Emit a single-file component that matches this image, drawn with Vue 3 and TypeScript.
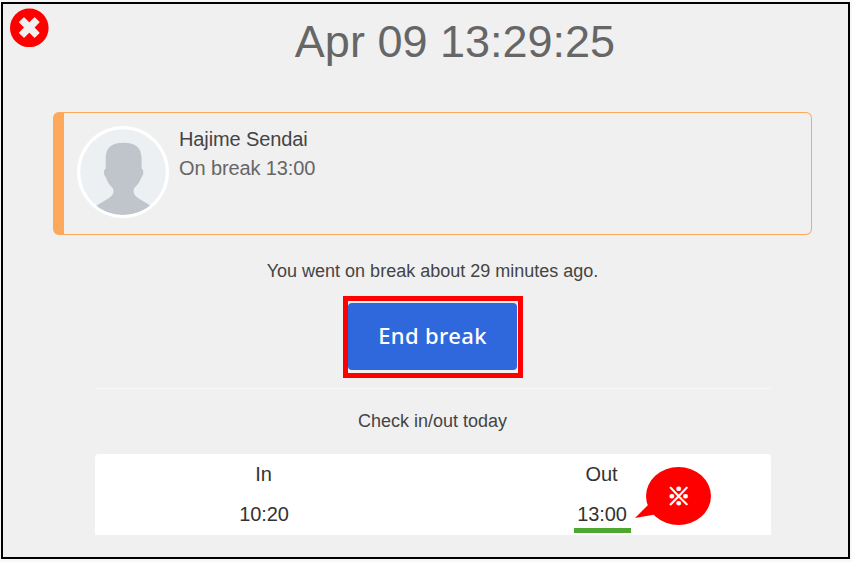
<script setup lang="ts">
interface Entry {
  label: string
  time: string
  marked: boolean
}

const clock = 'Apr 09 13:29:25'
const employee = { name: 'Hajime Sendai', status: 'On break 13:00' }
const entries: Entry[] = [
  { label: 'In', time: '10:20', marked: false },
  { label: 'Out', time: '13:00', marked: true },
]
</script>

<template>
  <div class="page">
    <main class="frame">
      <button class="close" type="button" aria-label="Close">
        <svg viewBox="0 0 39 39" width="39" height="39">
          <circle cx="19.300" cy="19.800" r="19.300" fill="#ff0000" />
          <path
            d="M14 9.800L19.300 15.100L24.600 9.800L29 14.200L23.700 19.500L29 24.800L24.600 29.200L19.300 23.900L14 29.200L9.600 24.800L14.900 19.500L9.600 14.200Z"
            fill="#f0f0f0"
            stroke="#f0f0f0"
            stroke-width="1.200"
            stroke-linejoin="round"
          />
        </svg>
      </button>

      <h1 class="clock">{{ clock }}</h1>

      <section class="card">
        <svg class="avatar" viewBox="0 0 92 92" width="92" height="92">
          <defs>
            <clipPath id="face"><circle cx="46" cy="46" r="43" /></clipPath>
          </defs>
          <circle cx="46" cy="46" r="46" fill="#ffffff" />
          <circle cx="46" cy="46" r="42.800" fill="#ecf0f3" />
          <path
            clip-path="url(#face)"
            fill="#c0c4cb"
            d="M46.500 16.700C34 16.700 28.700 22 28.700 33V42.500C26.300 44 26.500 49 28.700 51C30 56 33.500 60 36 62.500C37 66 36.500 69 32 72C28 75 23 77 19 80V92H74V80C70 77 65 75 61 72C56.500 69 56 66 57 62.500C59.500 60 63 56 64.500 51C66.800 49 67 44 64.600 42.500V33C64.600 22 59 16.700 46.500 16.700Z"
          />
        </svg>
        <div class="person">
          <div class="name">{{ employee.name }}</div>
          <div class="status">{{ employee.status }}</div>
        </div>
      </section>

      <p class="notice">You went on break about 29 minutes ago.</p>

      <div class="highlight">
        <button class="action" type="button">End break</button>
      </div>

      <hr class="rule" />
      <h2 class="heading">Check in/out today</h2>

      <section class="entries">
        <div v-for="entry in entries" :key="entry.label" class="entry">
          <div class="label">{{ entry.label }}</div>
          <div class="time" :class="{ marked: entry.marked }">{{ entry.time }}</div>
        </div>
        <div class="callout">
          <svg viewBox="0 0 76 58" width="76" height="58">
            <ellipse cx="43.500" cy="29" rx="32.500" ry="29" fill="#ff0000" />
            <path d="M13 38L0 51L20 47.500Z" fill="#ff0000" />
            <text class="symbol" x="43.800" y="37.500" text-anchor="middle" fill="#ffffff">※</text>
          </svg>
        </div>
      </section>
    </main>
  </div>
</template>

<style>
body {
  background: #f5f5f5;
}
</style>

<style scoped>
.page {
  box-sizing: border-box;
  height: 562px;
  padding: 2px 2px 3px 1px;
  background: #f8f8f8;
  font-family: "Liberation Sans", Arial, sans-serif;
  overflow: hidden;
}
.frame {
  position: relative;
  box-sizing: border-box;
  height: 557px;
  padding: 0 36px 0 50px;
  border: 2px solid #000;
  background: #f0f0f0;
  display: flex;
  flex-direction: column;
  align-items: center;
}
.close {
  position: absolute;
  left: 7px;
  top: 4px;
  padding: 0;
  border: 0;
  background: none;
}
.close svg {
  display: block;
}
.clock {
  margin: 11px 0 0 45px;
  font-size: 45px;
  line-height: 54px;
  font-weight: 400;
  color: #666;
}
.card {
  box-sizing: border-box;
  width: 100%;
  height: 123px;
  margin-top: 43px;
  padding: 13px;
  border: 1px solid #fda85b;
  border-left-width: 11px;
  border-radius: 6px;
  display: flex;
  gap: 10px;
}
.avatar {
  flex: none;
}
.person {
  font-size: 20px;
  line-height: 29px;
  margin-top: -1px;
  letter-spacing: -0.12px;
}
.name {
  color: #444;
}
.status {
  color: #666;
}
.notice {
  margin: 25px 0 0;
  font-size: 18px;
  line-height: 22px;
  color: #444;
}
.highlight {
  box-sizing: border-box;
  width: 180px;
  height: 82px;
  margin-top: 14px;
  padding: 2px 1px 3px 0;
  border: 5px solid #ff0000;
  align-self: flex-start;
  margin-left: 290px;
  background: #f0f0f0;
}
.action {
  display: block;
  width: 100%;
  height: 100%;
  padding: 0 0 3px;
  border: 0;
  border-radius: 4px;
  background: #2f67dc;
  color: #fff;
  font: 500 22px "Noto Sans", sans-serif;
  letter-spacing: 0.35px;
}
.rule {
  width: 676px;
  height: 1px;
  margin: 10px 0 0;
  border: 0;
  background: #f9f9f9;
}
.heading {
  margin: 21px 0 0;
  font-size: 18px;
  line-height: 22px;
  font-weight: 400;
  color: #444;
}
.entries {
  position: relative;
  width: 676px;
  height: 81px;
  margin-top: 22px;
  background: #fff;
  border-radius: 4px 4px 0 0;
  display: grid;
  grid-template-columns: 1fr 1fr;
  font-size: 20px;
  line-height: 40px;
  color: #333;
}
.entry {
  display: flex;
  flex-direction: column;
  align-items: center;
}
.label {
  height: 40px;
}
.time {
  box-sizing: border-box;
  width: 57px;
  height: 39px;
  text-align: center;
  letter-spacing: -0.15px;
  margin-left: 1px;
}
.marked {
  border-bottom: 5px solid #4ea72e;
}
.callout {
  position: absolute;
  left: 540px;
  top: 13px;
}
.callout svg {
  display: block;
}
.symbol {
  font: 700 24px "Noto Sans CJK JP", sans-serif;
  stroke: #fff;
  stroke-width: 0.9px;
}
</style>
